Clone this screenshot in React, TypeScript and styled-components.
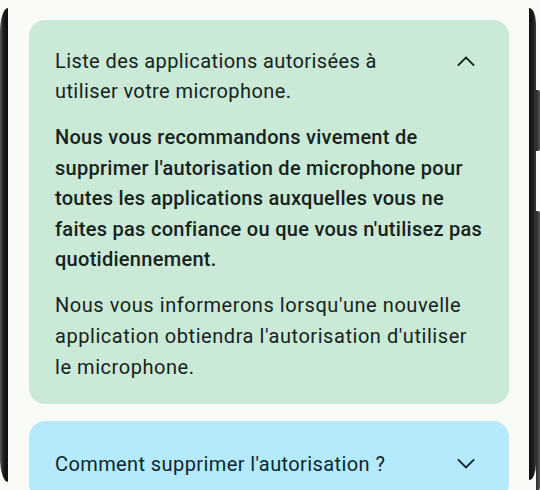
import styled, { createGlobalStyle } from 'styled-components';

const GlobalStyle = createGlobalStyle`
  html, body {
    margin: 0;
    padding: 0;
    background: #f9fbf7;
  }
  body {
    font-family: Roboto, "Noto Sans", sans-serif;
    -webkit-font-smoothing: antialiased;
  }
`;

const Phone = styled.div`
  display: flex;
  height: 490px;
  width: 540px;
  overflow: hidden;
`;

const Bezel = styled.div<{ $side: 'left' | 'right' }>`
  flex: 0 0 ${(p) => (p.$side === 'left' ? '8px' : '7px')};
  background: ${(p) =>
    p.$side === 'left'
      ? 'linear-gradient(90deg, #5a5a5a 0%, #1c1c1c 45%, #0e0e0e 100%)'
      : 'linear-gradient(90deg, #0e0e0e 0%, #1c1c1c 60%, #3a3a3a 100%)'};
  border-radius: ${(p) =>
    p.$side === 'left' ? '10px 0 0 10px / 30px 0 0 30px' : '0 10px 10px 0 / 0 22px 22px 0'};
  margin: ${(p) => (p.$side === 'left' ? '8px 0' : '8px 0 10px')};
`;

const Keys = styled.div`
  flex: 0 0 4px;
  display: flex;
  flex-direction: column;
  padding-top: 90px;
  gap: 60px;
`;

const Key = styled.div<{ $h: number }>`
  height: ${(p) => p.$h}px;
  background: linear-gradient(90deg, #2a2a2a, #555);
  border-radius: 0 2px 2px 0;
`;

const Screen = styled.main`
  flex: 1;
  background: #f9fbf7;
  padding: 20px 20px 0 21px;
  display: flex;
  flex-direction: column;
  gap: 17px;
  overflow: hidden;
`;

const Card = styled.section<{ $tone: 'green' | 'blue'; $pt: number }>`
  background: ${(p) => (p.$tone === 'green' ? '#cbe9d7' : '#b4eafc')};
  color: ${(p) => (p.$tone === 'green' ? '#15231c' : '#0c262f')};
  border-radius: 16px;
  padding: ${(p) => p.$pt}px 24px 21px 26px;
  flex-shrink: 0;
`;

const Header = styled.div`
  display: flex;
  align-items: flex-start;
  gap: 12px;
`;

const Title = styled.h2`
  flex: 1;
  margin: 0;
  font-size: 20px;
  font-weight: 400;
  line-height: 30px;
  letter-spacing: 0.4px;
`;

const ChevronBox = styled.span`
  flex: 0 0 24px;
  height: 30px;
  margin-right: 7px;
  display: flex;
  align-items: center;
  justify-content: center;
`;

const Body = styled.p<{ $bold?: boolean; $mt: number }>`
  margin: ${(p) => p.$mt}px 0 0;
  font-size: 20px;
  font-weight: ${(p) => (p.$bold ? 500 : 400)};
  line-height: ${(p) => (p.$bold ? '30.6px' : '31px')};
  letter-spacing: ${(p) => (p.$bold ? '0.28px' : '0.55px')};
`;

const Chevron = ({ up }: { up?: boolean }) => (
  <svg width="18" height="10" viewBox="0 0 18 10" fill="none">
    <polyline
      points={up ? '1.5,9 9,1.5 16.5,9' : '1.5,1 9,8.5 16.5,1'}
      stroke="currentColor"
      strokeWidth="1.8"
      strokeLinecap="square"
    />
  </svg>
);

export default function App() {
  return (
    <>
      <GlobalStyle />
      <Phone>
        <Bezel $side="left" />
        <Screen>
          <Card $tone="green" $pt={26}>
            <Header>
              <Title>Liste des applications autorisées à utiliser votre microphone.</Title>
              <ChevronBox>
                <Chevron up />
              </ChevronBox>
            </Header>
            <Body $bold $mt={16}>
              Nous vous recommandons vivement de supprimer l'autorisation de microphone pour
              toutes les applications auxquelles vous ne faites pas confiance ou que vous
              n'utilisez pas quotidiennement.
            </Body>
            <Body $mt={15}>
              Nous vous informerons lorsqu'une nouvelle application obtiendra l'autorisation
              d'utiliser le microphone.
            </Body>
          </Card>
          <Card $tone="blue" $pt={28}>
            <Header>
              <Title>Comment supprimer l'autorisation ?</Title>
              <ChevronBox>
                <Chevron />
              </ChevronBox>
            </Header>
          </Card>
        </Screen>
        <Bezel $side="right" />
        <Keys>
          <Key $h={88} />
          <Key $h={400} />
        </Keys>
      </Phone>
    </>
  );
}
